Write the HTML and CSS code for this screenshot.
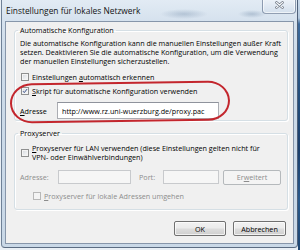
FILE: index.html
```html
<!DOCTYPE html>
<html lang="de">
<head>
<meta charset="utf-8">
<title>Einstellungen für lokales Netzwerk</title>
<link rel="stylesheet" href="styles.css">
</head>
<body>
<div class="screen">
  <div class="window">
    <div class="titlebar">
      <span class="title">Einstellungen für lokales Netzwerk</span>
      <div class="close">
        <svg width="9" height="8" viewBox="0 0 9 8"><path d="M1.5 1.5 L7.5 6.5 M7.5 1.5 L1.5 6.5" stroke="#6b7480" stroke-width="2.6" stroke-linecap="round"/><path d="M1.5 1.5 L7.5 6.5 M7.5 1.5 L1.5 6.5" stroke="#f4f6f8" stroke-width="1.2" stroke-linecap="round"/></svg>
      </div>
    </div>
    <div class="client">
      <fieldset class="group group-auto">
        <legend>Automatische Konfiguration</legend>
        <p class="desc">Die automatische Konfiguration kann die manuellen Einstellungen außer Kraft<br>setzen. Deaktivieren Sie die automatische Konfiguration, um die Verwendung<br>der manuellen Einstellungen sicherzustellen.</p>
        <label class="check check-detect"><span class="box"></span><span>Einstellungen <u>a</u>utomatisch erkennen</span></label>
        <label class="check check-script"><span class="box"><svg width="8" height="8" viewBox="0 0 8 8"><path d="M1.3 4.2 L3.1 6.1 L6.8 1.4" fill="none" stroke="#3d5189" stroke-width="1.3"/></svg></span><span><u>S</u>kript für automatische Konfiguration verwenden</span></label>
        <div class="addr-row">
          <span class="addr-label"><u>A</u>dresse</span>
          <input class="field field-url" type="text" value="http://www.rz.uni-wuerzburg.de/proxy.pac">
        </div>
      </fieldset>
      <fieldset class="group group-proxy">
        <legend>Proxyserver</legend>
        <label class="check check-proxy"><span class="box"></span><span class="check-text"><u>P</u>roxyserver für LAN verwenden (diese Einstellungen gelten nicht für<br>VPN- oder Einwählverbindungen)</span></label>
        <div class="proxy-row">
          <span class="dis proxy-label">Adresse:</span>
          <input class="field field-disabled field-host" type="text" disabled>
          <span class="dis port-label">Port:</span>
          <input class="field field-disabled field-port" type="text" disabled>
          <button class="btn btn-disabled btn-adv" disabled>Er<u>w</u>eitert</button>
        </div>
        <label class="check check-bypass dis"><span class="box box-disabled"></span><span><u>P</u>roxyserver für lokale Adressen umgehen</span></label>
      </fieldset>
      <div class="actions">
        <button class="btn btn-ok">OK</button>
        <button class="btn btn-cancel">Abbrechen</button>
      </div>
      <div class="highlight"></div>
    </div>
  </div>
  <div class="desktop"></div>
</div>
</body>
</html>
```

FILE: styles.css
```css
* { box-sizing: border-box; }
html, body { margin: 0; padding: 0; }
body {
  width: 300px;
  height: 250px;
  overflow: hidden;
  background: #e9eff5;
  font-family: "Open Sans", "Noto Sans", sans-serif;
  font-size: 7.2px;
  color: #000;
}
.screen {
  display: flex;
  width: 300px;
  height: 250px;
}
.window {
  margin-left: 1px;
  width: 297px;
  height: 248px;
  display: flex;
  flex-direction: column;
  padding: 0 3px 3px 3px;
  border-left: 1px solid #6f8197;
  border-right: 1px solid #4e6079;
  border-bottom: 1px solid #5b6c82;
  border-radius: 0 0 4px 4px;
  background:
    radial-gradient(ellipse 24px 5px at 182px 14px, rgba(80,110,145,0.28), rgba(80,110,145,0) 100%),
    radial-gradient(ellipse 14px 4px at 250px 14px, rgba(80,110,145,0.30), rgba(80,110,145,0) 100%),
    linear-gradient(180deg, #e2ebf4 0px, #d6e2ee 20px, #cddbe9 60px, #c9d8e7 248px);
}
.titlebar {
  height: 21px;
  margin: 0 -3px 0 -3px;
  padding-left: 4px;
  display: flex;
  align-items: flex-start;
}
.title {
  font-size: 8.4px;
  line-height: 10px;
  margin-top: 6px;
  color: #141414;
  white-space: nowrap;
}
.close {
  margin-left: auto;
  margin-right: 1px;
  margin-top: -1px;
  width: 34px;
  height: 15px;
  border: 1px solid rgba(70,90,120,0.55);
  border-top: none;
  border-radius: 0 0 4px 4px;
  background: linear-gradient(180deg, #eef3f9 0%, #dfe8f2 55%, #d3dfec 100%);
  box-shadow: inset 0 0 0 1px rgba(255,255,255,0.6);
  display: flex;
  align-items: center;
  justify-content: center;
  padding-bottom: 2px;
}
.close svg { display: block; }
.client {
  flex: 1;
  position: relative;
  background: #f0f0f0;
  border: 1px solid #8796aa;
  padding: 3px 5px 0 8px;
  display: flex;
  flex-direction: column;
}
.group {
  margin: 0;
  min-width: 0;
  border: 1px solid #d5dfe5;
  border-radius: 3px;
  box-shadow: 1px 1px 0 #fff, inset 1px 1px 0 #fff;
  padding: 4px 5px 1px 5px;
}
.group legend {
  padding: 0 2px;
  margin-left: -2px;
  line-height: 10px;
}
.desc {
  margin: 0;
  line-height: 9px;
  white-space: nowrap;
}
.check {
  display: flex;
  align-items: center;
  line-height: 10px;
  white-space: nowrap;
}
.box {
  width: 8px;
  height: 8px;
  margin-left: 1px;
  margin-right: 3px;
  flex: none;
  border: 1px solid #8e8f8f;
  background: linear-gradient(135deg, #d4d7dc 0%, #eceef0 60%, #f8f8f8 100%);
  box-shadow: inset 0 0 0 1px #f4f4f4;
  display: flex;
  align-items: center;
  justify-content: center;
}
.box svg { display: block; }
.check-detect { margin-top: 6px; }
.check-script { margin-top: 4px; }
.addr-row {
  margin-top: 6px;
  display: flex;
  align-items: center;
  height: 17px;
}
.addr-label { width: 37px; flex: none; }
.field {
  -webkit-appearance: none;
  appearance: none;
  margin: 0;
  font: inherit;
  color: #000;
  border: 1px solid #abadb3;
  border-top-color: #8f939c;
  background: #fff;
  padding: 0 4px;
  outline: none;
}
.field-url { width: 162px; height: 17px; }
.group-proxy {
  margin-top: 7px;
  padding: 6px 5px 8px 5px;
}
.check-text {
  line-height: 9px;
}
.proxy-row {
  margin-top: 8px;
  display: flex;
  align-items: center;
  height: 14px;
}
.dis { color: #8d8d8d; }
.proxy-label { width: 38px; flex: none; }
.field-disabled {
  background: #f6f6f6;
  border: 1px solid #c8cacd;
  height: 14px;
}
.field-host { width: 73px; }
.port-label { width: 24px; margin-left: 8px; flex: none; }
.field-port { width: 56px; }
.btn {
  -webkit-appearance: none;
  appearance: none;
  margin: 0;
  font: inherit;
  color: #000;
  padding: 0;
  border: 1px solid #707070;
  border-radius: 2px;
  background: linear-gradient(180deg, #f2f2f2 0%, #ebebeb 48%, #dddddd 52%, #cfcfcf 100%);
  box-shadow: inset 0 0 0 1px rgba(255,255,255,0.7);
  line-height: 12px;
  text-align: center;
}
.btn-disabled {
  color: #8d8d8d;
  border-color: #b5b9bc;
  background: #f4f4f4;
  box-shadow: none;
}
.btn-adv { width: 58px; height: 15px; margin-left: 4px; }
.check-proxy { align-items: center; }
.check-bypass { margin-top: 7px; }
.check-bypass .box { margin-left: 13px; }
.box-disabled {
  border-color: #b8b8b8;
  background: #f4f4f4;
  box-shadow: none;
}
.actions {
  margin-top: 11px;
  display: flex;
  justify-content: flex-end;
  gap: 7px;
  padding-right: 2px;
}
.btn-ok { width: 52px; height: 15px; }
.btn-cancel { width: 53px; height: 15px; }
.highlight {
  position: absolute;
  left: 4px;
  top: 60px;
  width: 220px;
  height: 40px;
  border: 2px solid #c3262d;
  border-radius: 22px / 20px;
  transform: rotate(-0.8deg);
  pointer-events: none;
}
.desktop {
  width: 2px;
  height: 250px;
  background: linear-gradient(180deg, #c9d9ea 0px, #b4c9de 18px, #3d6a9b 24px, #24507f 90px, #1b3f6c 150px, #2a5a8c 200px, #1d4572 250px);
}
```
